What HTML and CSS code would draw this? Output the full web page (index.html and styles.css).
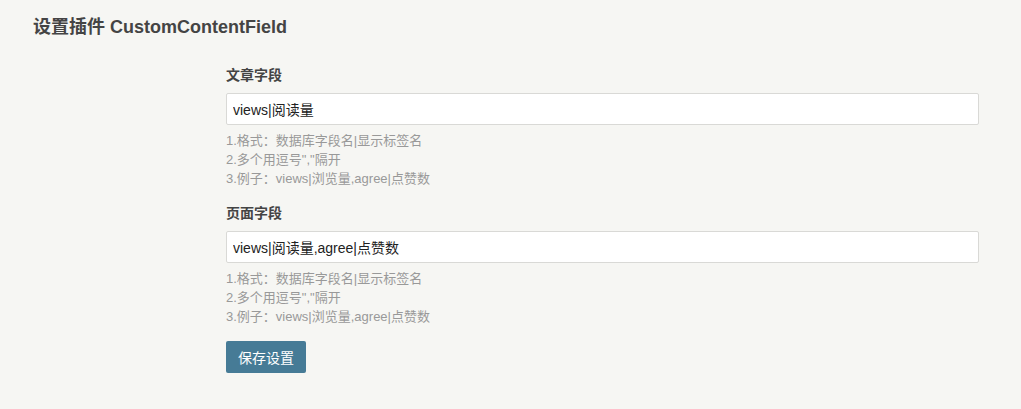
FILE: index.html
```html
<!DOCTYPE html>
<html lang="zh-CN">
<head>
<meta charset="utf-8">
<title>设置插件 CustomContentField</title>
<link rel="stylesheet" href="styles.css">
</head>
<body>
<div class="page">
  <h2 class="page-title">设置插件 CustomContentField</h2>
  <form class="option-form">
    <ul class="option">
      <li>
        <label class="option-label" for="post-field">文章字段</label>
        <input class="text" id="post-field" type="text" value="views|阅读量">
        <p class="description">1.格式：数据库字段名|显示标签名<br>2.多个用逗号","隔开<br>3.例子：views|浏览量,agree|点赞数</p>
      </li>
    </ul>
    <ul class="option">
      <li>
        <label class="option-label" for="page-field">页面字段</label>
        <input class="text" id="page-field" type="text" value="views|阅读量,agree|点赞数">
        <p class="description">1.格式：数据库字段名|显示标签名<br>2.多个用逗号","隔开<br>3.例子：views|浏览量,agree|点赞数</p>
      </li>
    </ul>
    <ul class="option submit">
      <li><button type="button" class="btn primary">保存设置</button></li>
    </ul>
  </form>
</div>
</body>
</html>
```

FILE: styles.css
```css
* { box-sizing: border-box; }
html, body {
  margin: 0;
  padding: 0;
  background: #F6F6F3;
}
body {
  font-family: "Liberation Sans", Arial, "Noto Sans CJK SC", sans-serif;
  font-size: 14px;
  line-height: 1.5;
  color: #444;
}
.page {
  padding: 14px 42px 0 33px;
}
.page-title {
  margin: 0;
  font-size: 18px;
  line-height: 27px;
  font-weight: bold;
  color: #444;
}
.option-form {
  margin: 24px 0 0 193px;
}
.option {
  list-style: none;
  margin: 0 0 15px;
  padding: 0;
}
.option-label {
  display: block;
  font-weight: bold;
  line-height: 21px;
  margin-bottom: 7px;
  color: #444;
}
.text {
  display: block;
  width: 100%;
  height: 32px;
  margin: 0;
  padding: 0 6px;
  border: 1px solid #D9D9D6;
  border-radius: 2px;
  background: #fff;
  font-family: inherit;
  font-size: 14px;
  color: #222;
  outline: none;
}
.description {
  margin: 6px 0 0;
  font-size: 13px;
  line-height: 19px;
  color: #999;
}
.option.submit { margin-top: 14px; }
.btn {
  height: 32px;
  padding: 0 12px;
  border: none;
  border-radius: 2px;
  font-family: inherit;
  font-size: 14px;
  cursor: pointer;
}
.btn.primary {
  background: #467B96;
  color: #fff;
}
```
